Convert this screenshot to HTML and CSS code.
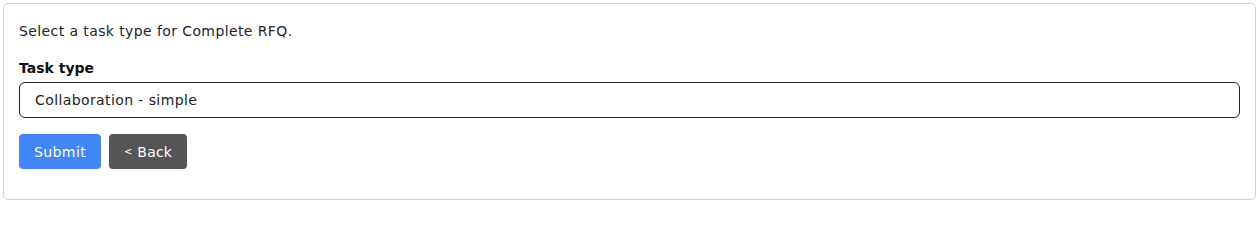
FILE: index.html
```html
<!DOCTYPE html>
<html lang="en">
<head>
<meta charset="utf-8">
<title>Task type</title>
<link rel="stylesheet" href="styles.css">
</head>
<body>
<div class="card">
  <p class="intro">Select a task type for Complete RFQ.</p>
  <form class="form">
    <label class="label" for="tasktype">Task type</label>
    <div class="select" id="tasktype">Collaboration - simple</div>
    <div class="actions">
      <button type="button" class="btn btn-primary">Submit</button>
      <button type="button" class="btn btn-dark"><span class="chev">&lt;</span> Back</button>
    </div>
  </form>
</div>
</body>
</html>
```
FILE: styles.css
```css
html, body {
  margin: 0;
  padding: 0;
  background: #fff;
}
body {
  padding: 3px 4px 0 3px;
  font-family: "DejaVu Sans", "Open Sans", sans-serif;
  font-size: 14px;
  letter-spacing: 0.4px;
  color: #212529;
}
.card {
  border: 1px solid #d0d0d0;
  border-radius: 5px;
  padding: 17px 15px 30px 15px;
}
.intro {
  margin: 0 0 16px 0;
  line-height: 21px;
}
.form {
  display: flex;
  flex-direction: column;
}
.label {
  font-weight: 700;
  letter-spacing: 0;
  line-height: 21px;
  margin-bottom: 3px;
  color: #111;
}
.select {
  height: 36px;
  box-sizing: border-box;
  border: 1px solid #222;
  border-radius: 6px;
  padding: 0 15px;
  display: flex;
  align-items: center;
  color: #222;
}
.actions {
  display: flex;
  gap: 8px;
  margin-top: 16px;
}
.btn {
  font: inherit;
  letter-spacing: inherit;
  height: 35px;
  border: none;
  border-radius: 4px;
  padding: 0 15px;
  color: #fff;
}
.btn-primary {
  background: #4285f4;
}
.btn-dark {
  background: #555;
  letter-spacing: 0.2px;
}
.chev {
  font-size: 10px;
  vertical-align: 2px;
}
```
